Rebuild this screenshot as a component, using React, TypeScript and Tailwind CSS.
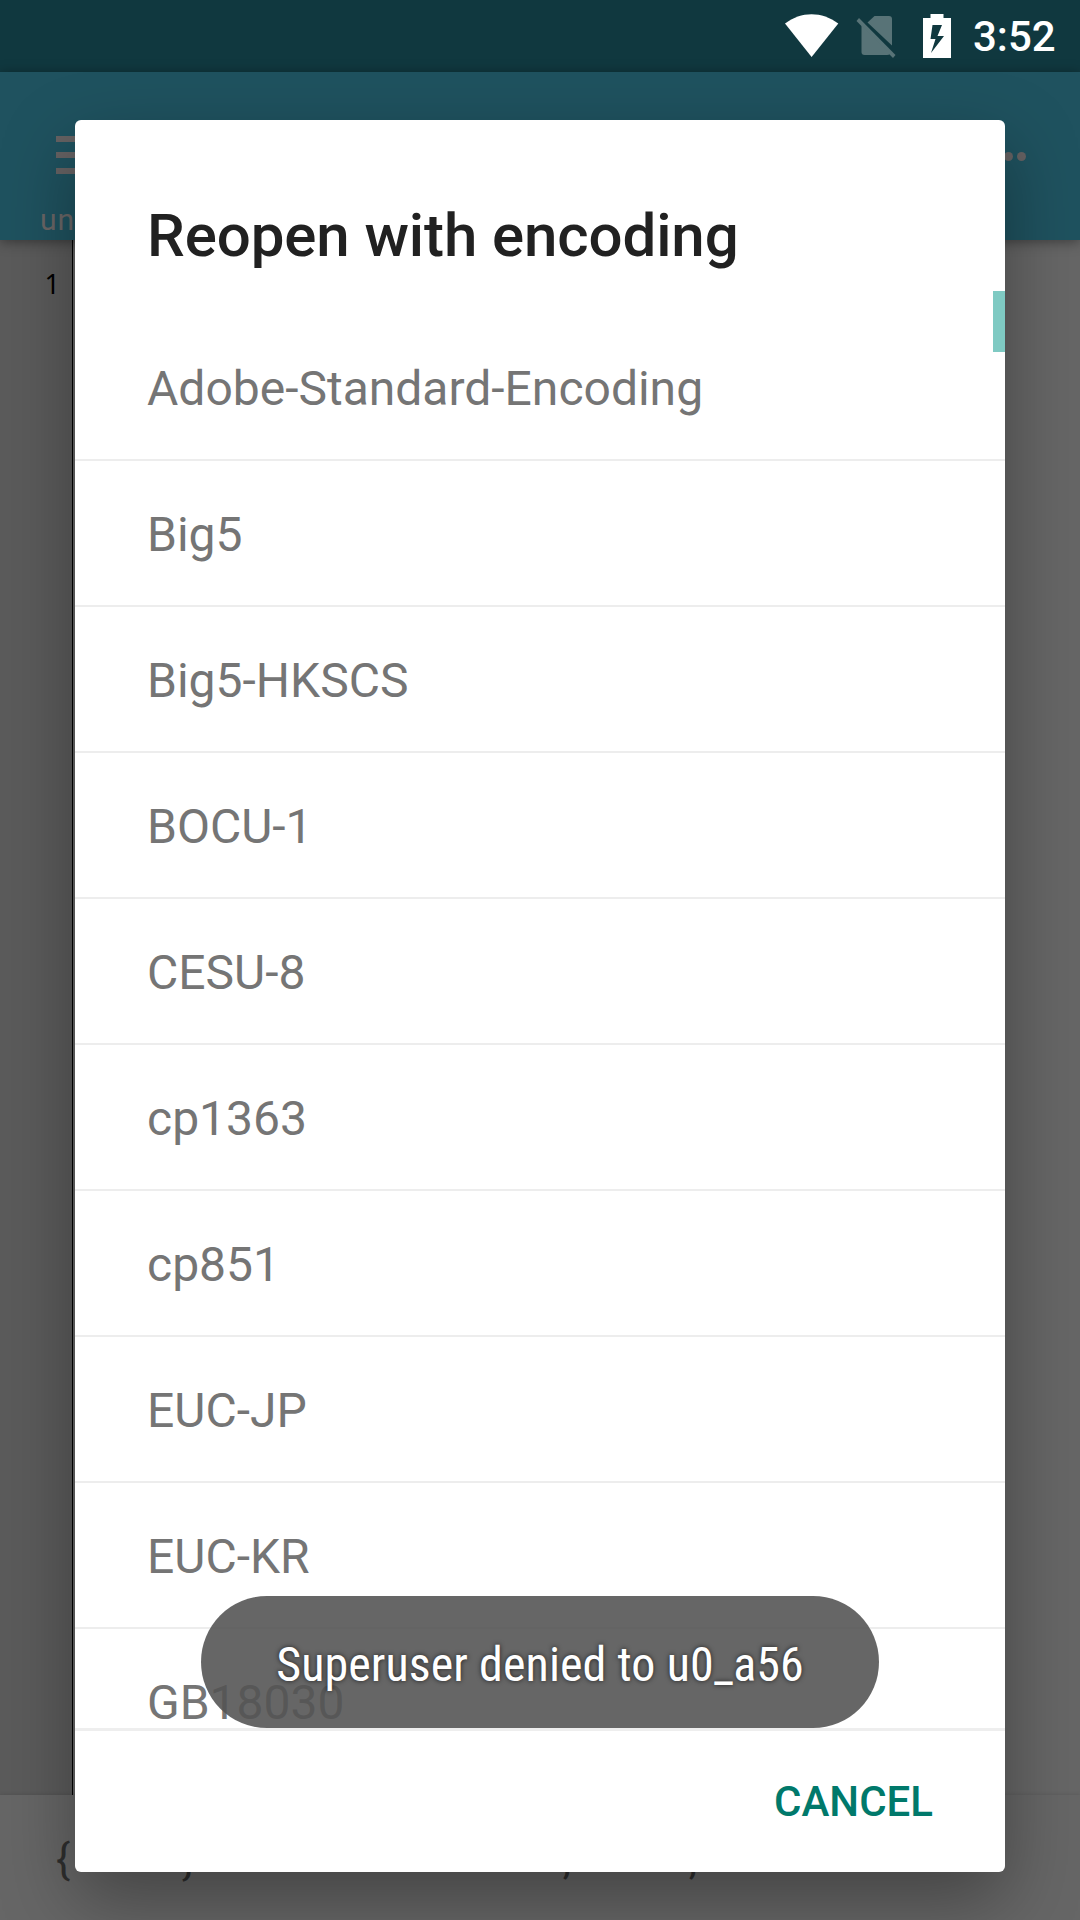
const encodings = [
  "Adobe-Standard-Encoding",
  "Big5",
  "Big5-HKSCS",
  "BOCU-1",
  "CESU-8",
  "cp1363",
  "cp851",
  "EUC-JP",
  "EUC-KR",
  "GB18030",
];

const symbolKeys = ["{", "}", "", "", ",", ";"];

function StatusBar() {
  return (
    <header className="relative flex h-[72px] shrink-0 items-center justify-end bg-[#10383f] pr-[24px]">
      <svg className="h-[72px] w-[174px]" viewBox="783 0 174 72" aria-hidden="true">
        <path d="M785 23.5C801 11 822 11 838.3 23.5L811.6 57z" fill="#fff" />
        <g fill="#587377">
          <path d="M867.5 22.5L874.5 16H889Q892 16 892 19V45.5z" />
          <path d="M861.5 25L890 54Q889 55 887 55H864.500Q861.500 55 861.500 52z" />
          <path d="M859 18L895.500 55L893 58L856.500 21z" />
        </g>
        <path
          fillRule="evenodd"
          fill="#fff"
          d="M930.500 14H943.500V18H951V58H923V18H930.500zM932.500 25L930.500 39H935.500L931 53L944 36H937.500L942 25z"
        />
      </svg>
      <span className="ml-[16px] w-[83px] whitespace-nowrap pt-[2px] text-[42px] font-medium leading-[72px] text-white">3:52</span>
    </header>
  );
}

function Editor() {
  return (
    <div className="flex h-[1920px] w-[1080px] flex-col">
      <StatusBar />
      <nav className="relative flex h-[168px] shrink-0 flex-col justify-between bg-[#1f525f] shadow-[0_2px_12px_rgba(0,0,0,0.4)]">
        <div className="flex items-start justify-between pl-[56px] pr-[54px] pt-[64px]">
          <div className="flex w-[48px] flex-col gap-[10px]">
            <div className="h-[6px] bg-[#666263]" />
            <div className="h-[6px] bg-[#666263]" />
            <div className="h-[6px] bg-[#666263]" />
          </div>
          <div className="flex gap-[4px] pt-[15.5px]">
            <div className="size-[9px] rounded-full bg-[#666263]" />
            <div className="size-[9px] rounded-full bg-[#666263]" />
            <div className="size-[9px] rounded-full bg-[#666263]" />
          </div>
        </div>
        <span className="pl-[40px] text-[30px] leading-[40px] tracking-[1px] text-[#6a6666]">untitled</span>
      </nav>
      <main className="flex grow bg-[#666666]">
        <div className="flex w-[73px] justify-end border-r border-black bg-[#5b5b5b] pr-[12px] pt-[26px] font-['Noto_Sans',sans-serif] text-[27px] leading-[36px] text-black">
          1
        </div>
      </main>
      <footer className="relative flex h-[125px] shrink-0 bg-[#666666] pt-[33px] shadow-[0_0_4px_rgba(0,0,0,0.15)]">
        {symbolKeys.map((key, i) => (
          <span key={i} className="w-[126px] text-center text-[42px] leading-[64px] text-[#2e2e2e]">
            {key}
          </span>
        ))}
      </footer>
    </div>
  );
}

function EncodingDialog() {
  return (
    <section className="relative flex h-[1752px] w-[930px] flex-col rounded-[6px] bg-white shadow-[0_28px_72px_rgba(0,0,0,0.34)]">
      <h1 className="h-[171px] shrink-0 pl-[72px] pt-[76px] text-[60px] font-medium leading-[80px] tracking-[-0.1px] text-[#212121]">
        Reopen with encoding
      </h1>
      <ul className="h-[1437px] shrink-0 overflow-hidden pt-[24px]">
        {encodings.map((name) => (
          <li key={name} className="h-[146px] border-b-2 border-[#ededed] pl-[72px] pt-[42px] text-[48px] leading-[64px] text-[#757575]">
            {name}
          </li>
        ))}
      </ul>
      <div className="absolute right-0 top-[171px] h-[61px] w-[12px] bg-[#7fcac3]" />
      <div className="flex grow justify-end border-t-[3px] border-[#eeeeee] pr-[72px]">
        <button className="text-[42px] font-medium leading-[141px] text-[#00796b]">CANCEL</button>
      </div>
    </section>
  );
}

function Toast() {
  return (
    <div className="absolute left-[201px] top-[1596px] flex h-[132px] w-[678px] items-center justify-center rounded-full bg-[#535353]/[0.89] pt-[5px]">
      <span className="whitespace-nowrap font-['Roboto_Condensed','Roboto',sans-serif] text-[48px] tracking-[0.08px] text-white [font-stretch:75%] [text-shadow:0_0_5px_rgba(0,0,0,0.7)]">
        Superuser denied to u0_a56
      </span>
    </div>
  );
}

export default function App() {
  return (
    <div className="relative h-[1920px] w-[1080px] overflow-hidden font-['Roboto',sans-serif]">
      <Editor />
      <div className="absolute inset-x-0 bottom-0 top-[72px] flex justify-center overflow-hidden pt-[48px]">
        <EncodingDialog />
      </div>
      <Toast />
    </div>
  );
}
